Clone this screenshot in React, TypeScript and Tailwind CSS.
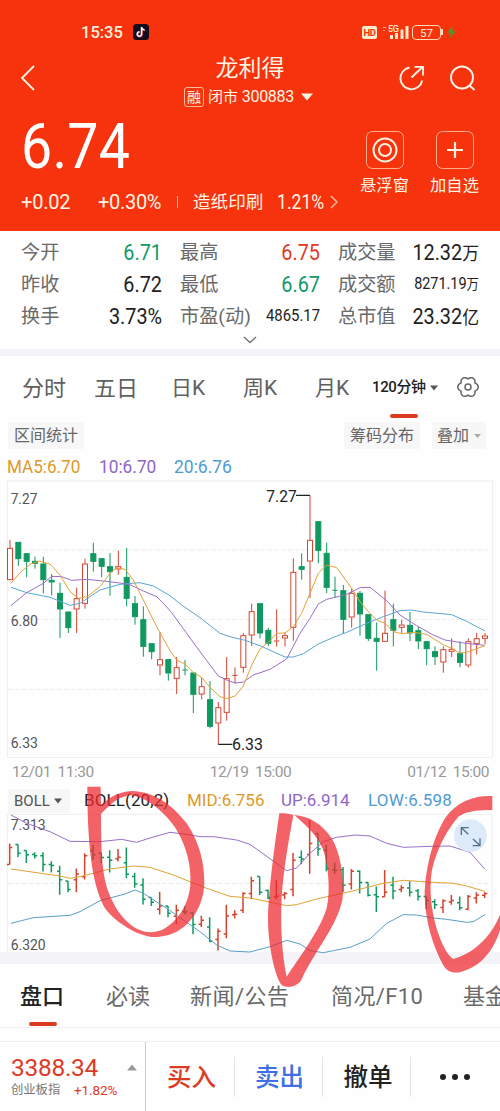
import React from 'react';

type Candle = [high: number, top: number, bottom: number, low: number, up: 0 | 1];

// Vertical positions on the main chart canvas, one entry every 25 units.
const candles: Candle[] = [
  [180, 204, 300, 300, 1], [186, 186, 237, 258, 0], [220, 220, 245, 292, 0], [230, 243, 251, 266, 0],
  [230, 251, 300, 340, 0], [282, 300, 307, 346, 0], [308, 339, 388, 474, 0], [395, 395, 444, 459, 0],
  [323, 355, 388, 459, 1], [236, 251, 371, 386, 1], [188, 220, 245, 275, 0], [235, 235, 260, 292, 0],
  [219, 259, 276, 347, 0], [212, 259, 268, 284, 1], [204, 291, 356, 379, 0], [348, 370, 411, 434, 0],
  [379, 418, 500, 530, 0], [490, 490, 516, 538, 0], [456, 538, 556, 586, 1], [538, 538, 580, 602, 0],
  [531, 562, 596, 642, 1], [540, 569, 572, 586, 0], [578, 578, 644, 699, 0], [594, 619, 643, 658, 1],
  [603, 658, 740, 745, 0], [666, 682, 730, 793, 1], [531, 595, 698, 722, 1], [562, 585, 588, 610, 1],
  [459, 466, 563, 578, 1], [371, 394, 466, 498, 1], [370, 370, 460, 475, 0], [443, 450, 491, 498, 0],
  [388, 482, 485, 500, 1], [458, 466, 475, 500, 1], [235, 276, 443, 482, 1], [220, 259, 269, 299, 0],
  [46, 180, 244, 354, 1], [124, 124, 212, 250, 0], [188, 219, 323, 339, 0], [290, 330, 333, 354, 0],
  [315, 331, 419, 460, 0], [326, 339, 412, 443, 1], [333, 339, 403, 467, 0], [403, 403, 476, 483, 0],
  [427, 474, 485, 572, 0], [332, 459, 485, 485, 1], [371, 418, 452, 499, 0], [419, 434, 443, 460, 1],
  [396, 435, 460, 483, 0], [441, 451, 484, 507, 0], [484, 484, 507, 556, 0], [499, 514, 531, 555, 0],
  [499, 508, 547, 578, 1], [475, 507, 515, 531, 1], [484, 520, 548, 562, 0], [475, 484, 556, 563, 1],
  [459, 475, 492, 523, 1], [459, 467, 476, 492, 1],
];

const ma5 = '33,310 60,278 90,253 118,243 150,252 180,285 210,335 235,355 262,350 300,320 330,280 350,263 375,268 400,300 430,360 470,440 510,512 530,540 555,552 580,578 605,592 630,622 660,650 680,656 705,648 730,618 755,555 780,507 810,482 830,460 855,459 880,440 905,400 930,340 955,280 980,255 1010,263 1055,325 1080,365 1105,395 1130,420 1155,430 1180,455 1205,461 1240,457 1280,463 1330,494 1355,505 1380,519 1400,517 1430,506 1455,497';
const ma10 = '33,377 80,338 130,310 155,289 185,290 215,301 260,298 310,303 360,309 390,314 430,333 470,350 495,375 515,398 560,460 600,515 630,555 655,588 680,600 705,609 730,606 760,585 810,568 860,537 900,460 930,415 955,372 980,358 1005,352 1040,343 1080,323 1110,322 1160,362 1200,405 1250,437 1300,465 1335,480 1390,489 1455,496';
const ma20 = '33,322 80,338 150,352 210,376 240,370 300,330 360,313 420,308 460,318 510,347 545,375 600,413 660,460 690,470 735,481 780,497 855,531 880,531 910,521 955,492 1000,472 1040,457 1100,430 1150,410 1200,392 1235,390 1270,396 1355,404 1400,424 1455,453';

const bollMid = '33,267 180,288 210,295 240,290 330,267 400,258 450,262 520,285 620,325 690,349 750,354 860,377 890,374 950,357 1050,335 1150,310 1210,301 1300,307 1360,310 1400,318 1455,334';
const bollUp = '33,105 80,130 150,155 210,184 300,185 365,178 410,187 450,174 510,157 560,163 600,170 640,170 710,180 750,193 860,272 890,264 930,220 970,185 1010,172 1065,165 1110,168 1160,190 1210,202 1290,199 1350,198 1410,217 1455,268';
const bollLow = '33,430 100,413 210,406 240,395 300,362 375,342 405,330 430,340 500,385 600,455 650,495 690,513 750,516 810,500 860,481 900,492 930,512 970,518 1050,502 1110,477 1160,430 1210,404 1250,405 1300,414 1340,418 1400,427 1420,425 1455,404';

const RED = '#d1442f';
const GREEN = '#0f9960';

function Line({ points, color }: { points: string; color: string }) {
  return <polyline points={points} fill="none" stroke={color} strokeWidth="3" strokeLinejoin="round" />;
}

function Caret({ className }: { className: string }) {
  return (
    <svg viewBox="0 0 10 6" className={className} fill="currentColor">
      <path d="M0 0h10L5 6z" />
    </svg>
  );
}

// Six-lobed settings wheel
const gearPoints = Array.from({ length: 72 }, (_, i) => {
  const t = (i * Math.PI) / 36;
  const r = 8 + 2.2 * Math.abs(Math.cos(3 * t));
  return `${(11 + r * Math.cos(t)).toFixed(2)},${(11 + r * Math.sin(t)).toFixed(2)}`;
}).join(' ');

function Gear() {
  return (
    <svg viewBox="0 0 22 22" className="w-[22px] h-[22px] mt-[20px] ml-[12px]" fill="none" stroke="#666" strokeWidth="1.5">
      <polygon points={gearPoints} strokeLinejoin="round" />
      <circle cx="11" cy="11" r="3" />
    </svg>
  );
}

function StatusBar() {
  return (
    <div className="flex items-center h-[22px] mt-[21px] text-[#fff0dc]">
      <span className="ml-[81px] w-[52px] pt-[2px] text-[16.5px] font-medium">15:35</span>
      <svg viewBox="0 0 16 16" className="w-4 h-4">
        <rect width="16" height="16" rx="3.5" fill="#120c1c" />
        <path d="M9 3.5v7a2.2 2.2 0 1 1-2-2.2M9 3.6c.3 1.7 1.4 2.6 3 2.7" fill="none" stroke="#e8384f" strokeWidth="1.6" />
        <path d="M8.5 3v7a2.2 2.2 0 1 1-2-2.2M8.5 3.2c.3 1.7 1.4 2.6 3 2.7" fill="none" stroke="#e9fbff" strokeWidth="1.5" />
      </svg>
      <span className="ml-[213px] w-[15px] h-[13px] rounded-[2px] bg-[#ffeccf] text-[#f6330d] text-[9.5px] leading-[13.5px] font-bold text-center tracking-[-0.4px]">HD</span>
      <svg viewBox="0 0 28 18" className="w-7 h-[18px] ml-[6px]" fill="#ffe6c8">
        <path d="M7 12h3v4H7zM12 10h3v6h-3zM17.5 6.5h3V16h-3zM22.5 3h3v13h-3z" />
        <text x="5" y="9" fontSize="9.5" fontWeight="600" textLength="11" stroke="#f6330d" strokeWidth="1.2" paintOrder="stroke">5G</text>
        <path d="M0 4h3v1H0zM0 7h2v1H0z" opacity=".6" />
      </svg>
      <span className="ml-px w-[29px] h-[15px] rounded-[4px] border border-[#ffd9b5] text-[11.5px] leading-[14px] text-center">57</span>
      <span className="w-[2px] h-[6px] bg-[#ffd9b5]" />
      <svg viewBox="0 0 10 14" className="w-[9px] h-3 ml-[4px]">
        <path d="M6 0L0 8h4l-1 6 7-8H6z" fill="#4c9a2a" />
      </svg>
    </div>
  );
}

function Header() {
  return (
    <header className="h-[231px] bg-[#f6330d] text-[#fff3e2] flex flex-col overflow-hidden">
      <StatusBar />
      <div className="mt-[11px] h-[54px] flex">
        <div className="w-[150px] pl-[20px] pt-[10px]">
          <svg viewBox="0 0 16 28" className="w-4 h-7" fill="none" stroke="currentColor" strokeWidth="1.8">
            <path d="M14 2L2 14l12 12" />
          </svg>
        </div>
        <div className="w-[200px] flex flex-col items-center">
          <h1 className="text-[23px] leading-[30px] h-[28px]">龙利得</h1>
          <div className="mt-[4px] h-[22px] flex items-center gap-[4px] text-[15px] -ml-[3px] whitespace-nowrap">
            <span className="w-[20px] h-[20px] border border-[#ffb79b] rounded-[3px] text-[14px] leading-[18px] text-center">融</span>
            <span className="text-[15px]">闭市 <span className="text-[16px] tracking-[-0.3px]">300883</span></span>
            <Caret className="w-3 h-[8px] ml-[3px]" />
          </div>
        </div>
        <div className="w-[150px] pl-[49px] pt-[11px] flex gap-[25px]">
          <svg viewBox="0 0 26 26" className="w-[26px] h-[26px]" fill="none" stroke="currentColor" strokeWidth="1.9">
            <path d="M10.5 2.5A11 11 0 1 0 23.2 15.5M12.5 12.5L23.5 2M15.5 1.9h8.6v8.6" />
          </svg>
          <svg viewBox="0 0 26 26" className="w-[26px] h-[26px]" fill="none" stroke="currentColor" strokeWidth="1.9">
            <circle cx="12" cy="12.5" r="11" />
            <path d="M19.5 20.5l5 4.5" />
          </svg>
        </div>
      </div>

      <div className="flex">
        <div className="w-[344px] pl-[21px]">
          <div className="h-[75px] leading-[77px] text-[63px] text-white">
            <span className="inline-block origin-left scale-x-[0.88] tracking-[0.3px]">6.74</span>
          </div>
          <div className="h-[38px] flex items-center text-[20px] whitespace-nowrap">
            <span className="w-[77px] tracking-[-0.2px]">+0.02</span>
            <span className="w-[79px] tracking-[-0.3px]">+0.30%</span>
            <span className="w-px h-3 mr-[15px] bg-[#ffb79b]" />
            <span className="w-[84px] text-[17.6px]">造纸印刷</span>
            <span className="w-[53px]">
              <span className="inline-block origin-left scale-x-[0.88]">1.21%</span>
            </span>
            <svg viewBox="0 0 8 14" className="w-2 h-[14px]" fill="none" stroke="#ffb79b" strokeWidth="1.5">
              <path d="M1 1l6 6-6 6" />
            </svg>
          </div>
        </div>
        <div className="pt-[23px] pl-[16px] flex gap-[21px] text-[16.3px]">
          <div className="w-[49px] flex flex-col items-center whitespace-nowrap">
            <svg viewBox="0 0 38 38" className="w-[38px] h-[38px]" fill="none" stroke="currentColor">
              <rect x=".5" y=".5" width="37" height="37" rx="6" stroke="#ffae8c" />
              <circle cx="19" cy="19" r="11.5" strokeWidth="2" />
              <circle cx="19" cy="19" r="6" strokeWidth="2" />
            </svg>
            <span className="mt-[5px]">悬浮窗</span>
          </div>
          <div className="w-[49px] flex flex-col items-center whitespace-nowrap">
            <svg viewBox="0 0 38 38" className="w-[38px] h-[38px]" fill="none" stroke="currentColor">
              <rect x=".5" y=".5" width="37" height="37" rx="6" stroke="#ffae8c" />
              <path d="M19 11v16M11 19h16" strokeWidth="2.2" />
            </svg>
            <span className="mt-[5px]">加自选</span>
          </div>
        </div>
      </div>
    </header>
  );
}

const big = 'text-[22px] scale-x-[0.9]';
const stats = [
  { label: '今开', value: '6.71', style: `${big} text-[#139a68]` },
  { label: '最高', value: '6.75', style: `${big} text-[#dd3a26]` },
  { label: '成交量', value: '12.32', unit: '万', style: big },
  { label: '昨收', value: '6.72', style: big },
  { label: '最低', value: '6.67', style: `${big} text-[#139a68]` },
  { label: '成交额', value: '8271.19', unit: '万', style: 'text-[16px] scale-x-[0.9]' },
  { label: '换手', value: '3.73%', style: big },
  { label: '市盈(动)', value: '4865.17', style: 'text-[16.5px] scale-x-[0.9]' },
  { label: '总市值', value: '23.32', unit: '亿', style: big },
];

function Stats() {
  return (
    <section className="h-[118px] pt-[6px] px-[21px]">
      <div className="grid grid-cols-[141px_140px_141px] grid-rows-[31px_32px_33px] gap-x-[18px] items-center">
        {stats.map((s) => (
          <div key={s.label} className="h-[28px] flex items-center justify-between whitespace-nowrap text-[#222]">
            <span className="pt-[2px] text-[19.2px] text-[#6a6a6a]">{s.label}</span>
            <span className={`inline-block origin-right ${s.style}`}>
              {s.value}
              {s.unit && <span className="text-[0.85em]">{s.unit}</span>}
            </span>
          </div>
        ))}
      </div>
      <svg viewBox="0 0 14 8" className="w-[14px] h-2 mx-auto mt-[3px]" fill="none" stroke="#777" strokeWidth="1.5">
        <path d="M1 1l6 5.5L13 1" />
      </svg>
    </section>
  );
}

function PeriodTabs() {
  return (
    <nav className="h-[66px] pl-[22px] flex text-[22px] leading-[65px] text-[#606060] whitespace-nowrap">
      <span className="w-[72px]">分时</span>
      <span className="w-[77px]">五日</span>
      <span className="w-[72px] text-[21px]">日K</span>
      <span className="w-[72px] text-[21px]">周K</span>
      <span className="w-[57px] text-[21px]">月K</span>
      <div className="w-[73px] h-[62px] flex flex-col text-[#222]">
        <div className="h-[58px] flex items-center text-[15px] font-medium tracking-[-0.4px]">
          <span className="w-[58px] pt-[5px]">120分钟</span>
          <Caret className="w-[8px] h-[6px] mt-[6px] text-[#555]" />
        </div>
        <div className="w-[28px] h-[4px] ml-[18px] rounded-full bg-[#db3b22] shrink-0" />
      </div>
      <Gear />
    </nav>
  );
}

function MainChart() {
  return (
    <svg viewBox="0 0 1500 834" className="block w-[500px] h-[278px]">
      <path d="M22 3H1478V832H22z" fill="none" stroke="#ededee" strokeWidth="3" />
      {[210, 418, 628].map((y) => (
        <path key={y} d={`M24 ${y}H1476`} stroke="#ececec" strokeWidth="3" strokeDasharray="14 7" />
      ))}
      {candles.map(([high, top, bottom, low, up], i) => {
        const x = 30 + i * 25;
        const color = up ? RED : GREEN;
        return (
          <g key={i} stroke={color} strokeWidth="3">
            <path d={`M${x} ${high}V${top}M${x} ${bottom}V${low}`} />
            {bottom - top < 5 ? (
              <path d={`M${x - 8} ${top + 1}h16M${x} ${top}V${bottom}`} />
            ) : (
              <rect x={x - 7.5} y={top + 1} width="15" height={bottom - top - 2} fill={up ? '#fff' : color} />
            )}
          </g>
        );
      })}
      <Line points={ma20} color="#5ba6da" />
      <Line points={ma10} color="#9a70c8" />
      <Line points={ma5} color="#e0a335" />
      <g fill="#555" fontSize="46">
        <text x="32" y="71" textLength="80" lengthAdjust="spacingAndGlyphs">7.27</text>
        <text x="32" y="437" textLength="82" lengthAdjust="spacingAndGlyphs">6.80</text>
        <text x="32" y="805" textLength="82" lengthAdjust="spacingAndGlyphs">6.33</text>
      </g>
      <g fill="#222" fontSize="49">
        <text x="799" y="65" textLength="91" lengthAdjust="spacingAndGlyphs">7.27</text>
        <text x="696" y="811" textLength="93" lengthAdjust="spacingAndGlyphs">6.33</text>
      </g>
      <path d="M888 46h42M655 793h42" stroke="#222" strokeWidth="4" />
    </svg>
  );
}

function BollChart() {
  // same bars as above, squeezed into the indicator's price range
  const scale = (y: number) => 119.9 + (y - 46) * 0.5246;
  return (
    <svg viewBox="0 102 1500 414" className="block w-[500px] h-[138px] overflow-visible">
      <path d="M22 516V103H1476V516" fill="none" stroke="#ededee" strokeWidth="3" />
      <path d="M24 310H1476" stroke="#e8e8e8" strokeWidth="3" strokeDasharray="14 7" />
      <g fill="#555" fontSize="46">
        <text x="32" y="151" textLength="105" lengthAdjust="spacingAndGlyphs">7.313</text>
        <text x="32" y="509" textLength="105" lengthAdjust="spacingAndGlyphs">6.320</text>
      </g>
      {candles.map(([high, top, bottom, low, up], i) => {
        const x = 29 + i * 25;
        const open = scale(up ? bottom : top);
        const close = scale(up ? top : bottom);
        return (
          <path
            key={i}
            d={`M${x - 8} ${open}H${x}M${x} ${close}h8M${x} ${scale(high)}V${scale(low)}`}
            stroke={up ? RED : GREEN}
            strokeWidth="4.5"
          />
        );
      })}
      <Line points={bollMid} color="#e0a335" />
      <Line points={bollUp} color="#9a70c8" />
      <Line points={bollLow} color="#5a9fc8" />
      <circle cx="1411" cy="167" r="49" fill="#d9e8f8" opacity=".9" />
      <path d="M1384 165v-22h22M1385 144l20 19M1440 175v22h-22M1439 196l-20-19" fill="none" stroke="#55708f" strokeWidth="4" />
    </svg>
  );
}

function Marker() {
  return (
    <svg viewBox="0 0 1500 630" className="absolute left-0 top-0 w-[500px] h-[210px] pointer-events-none" fill="#ee2b30" fillOpacity=".74" fillRule="evenodd">
      <path d="M262 20H302L303 78C330 48 360 35 395 33C470 35 520 80 560 130C600 190 613 250 613 310C611 380 570 435 530 455C500 470 470 472 450 470C400 462 340 420 315 385C285 330 262 240 262 20zM303 102C303 200 305 270 320 320C335 370 370 430 420 450C440 460 470 458 490 448C530 425 565 380 571 315C575 260 560 200 530 150C500 100 440 52 395 46C350 50 330 75 303 102z" />
      <path d="M838 100C860 98 872 103 880 105C868 170 850 270 845 350C841 430 845 520 860 590C900 530 960 450 980 385C992 330 985 260 970 210C945 155 910 130 883 105C925 108 965 130 995 175C1022 220 1032 290 1028 355C1012 440 945 510 904 600C890 622 860 626 845 615C825 590 805 500 804 420C805 330 825 190 838 100z" />
      <path d="M1477 48C1420 46 1370 65 1335 115C1295 180 1274 280 1274 350C1277 430 1300 500 1330 556C1342 576 1360 582 1385 575C1440 560 1480 515 1500 450V405C1470 475 1420 520 1360 537C1345 530 1330 500 1320 475C1295 410 1285 330 1296 270C1312 200 1345 145 1375 110C1400 92 1440 90 1477 90z" />
    </svg>
  );
}

function ChartPanel() {
  return (
    <section>
      <div className="h-[27px] px-[8px] flex items-center text-[16px] text-[#666] whitespace-nowrap">
        <span className="w-[76px] h-[27px] leading-[28px] text-center bg-[#f7f7f8] rounded-[2px]">区间统计</span>
        <span className="ml-[260px] w-[76px] h-[27px] leading-[28px] text-center bg-[#f7f7f8] rounded-[2px]">筹码分布</span>
        <span className="ml-[12px] w-[54px] h-[27px] flex items-center justify-center gap-[5px] bg-[#f7f7f8] rounded-[2px]">
          叠加
          <Caret className="w-[7px] h-[6px] text-[#aaa]" />
        </span>
      </div>
      <div className="h-[31px] pl-[7px] pt-[4px] flex items-center text-[18px]">
        <span className="w-[92px] text-[#dc9a28]">
          <span className="inline-block origin-left scale-x-[0.95]">MA5:6.70</span>
        </span>
        <span className="w-[75px] text-[#8f66c4]">
          <span className="inline-block origin-left scale-x-[0.96]">10:6.70</span>
        </span>
        <span className="inline-block origin-left scale-x-[0.97] text-[#4f9bd0]">20:6.76</span>
      </div>
      <MainChart />
      <div className="h-[28px] pl-[12px] pr-[11px] pt-[2px] flex items-center justify-between text-[15.5px] tracking-[-0.45px] [word-spacing:3px] text-[#999]">
        <span>12/01 11:30</span>
        <span>12/19 15:00</span>
        <span>01/12 15:00</span>
      </div>
      <div className="relative -mt-[6px]">
        <div className="h-[34px] pl-[8px] pt-[8px] flex items-center text-[17px] whitespace-nowrap">
          <span className="w-[62px] h-[24px] mr-[14px] pl-[6px] flex items-center gap-[4px] text-[15px] bg-[#f7f7f8] text-[#555]">
            BOLL
            <Caret className="w-2 h-[6px]" />
          </span>
          <span className="w-[103px] text-[#222] tracking-[0.1px]">BOLL(20,2)</span>
          <span className="w-[94px] text-[#dc9a28]">MID:6.756</span>
          <span className="w-[87px] text-[#8f66c4]">UP:6.914</span>
          <span className="text-[#4f9bd0] tracking-[0.2px]">LOW:6.598</span>
        </div>
        <BollChart />
        <Marker />
      </div>
    </section>
  );
}

function InfoTabs() {
  return (
    <nav className="h-[64px] border-b border-[#f1f1f1] pl-[20px] flex text-[22px] leading-[65px] text-[#6a6a6a] whitespace-nowrap overflow-hidden">
      <div className="w-[86px] flex flex-col text-[#222] shrink-0">
        <span className="h-[58px] font-medium">盘口</span>
        <div className="w-[28px] h-[4px] ml-[9px] rounded-full bg-[#db3b22]" />
      </div>
      <span className="w-[84px] shrink-0">必读</span>
      <span className="w-[141px] shrink-0 tracking-[0.5px]">新闻/公告</span>
      <span className="w-[132px] shrink-0 tracking-[0.4px]">简况/F10</span>
      <span className="shrink-0">基金</span>
    </nav>
  );
}

function BottomBar() {
  return (
    <footer className="mt-[13px] h-[70px] border-t border-[#eee] flex items-center">
      <div className="w-[146px] h-full pl-[11px] border-r border-[#ccc] flex">
        <div className="w-[116px] pt-[12px]">
          <div className="text-[24.5px] leading-[28px] tracking-[-0.3px] text-[#dd3a26]">3388.34</div>
          <div className="flex items-center text-[12.3px] leading-[16px] whitespace-nowrap">
            <span className="w-[63px] text-[#777]">创业板指</span>
            <span className="text-[13.5px] tracking-[-0.1px] text-[#dd3a26]">+1.82%</span>
          </div>
        </div>
        <Caret className="w-[10px] h-[7px] mt-[22px] rotate-180 text-[#999]" />
      </div>
      <button className="w-[89px] h-[40px] pl-[3px] pt-[2px] border-r border-[#e6e6e6] text-[24.5px] leading-[38px] font-medium text-[#dd3a26]">买入</button>
      <button className="w-[88px] h-[40px] pl-[2px] pt-[2px] border-r border-[#e6e6e6] text-[24.5px] leading-[38px] font-medium text-[#3f6fe4]">卖出</button>
      <button className="w-[88px] h-[40px] pl-[3px] pt-[2px] border-r border-[#e6e6e6] text-[24.5px] leading-[38px] font-medium text-[#222]">撤单</button>
      <div className="flex gap-[6px] ml-[29px]">
        <span className="w-[6px] h-[6px] rounded-full bg-[#222]" />
        <span className="w-[6px] h-[6px] rounded-full bg-[#222]" />
        <span className="w-[6px] h-[6px] rounded-full bg-[#222]" />
      </div>
    </footer>
  );
}

export default function App() {
  return (
    <div className="w-[500px] h-[1111px] overflow-hidden bg-[#fefefe] font-['Roboto','Noto_Sans_CJK_SC',sans-serif]">
      <Header />
      <Stats />
      <div className="h-[7px] bg-[#f3f3fa]" />
      <PeriodTabs />
      <ChartPanel />
      <div className="h-[12px] bg-[#f3f3f8]" />
      <InfoTabs />
      <BottomBar />
    </div>
  );
}
